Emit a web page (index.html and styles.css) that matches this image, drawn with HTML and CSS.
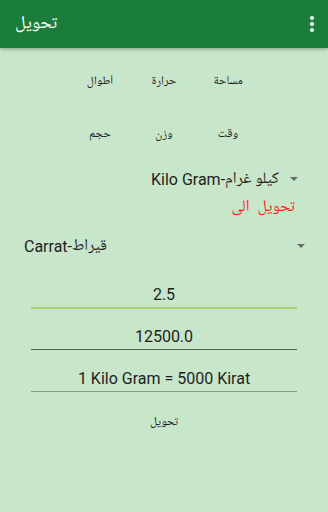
FILE: index.html
```html
<!DOCTYPE html>
<html lang="ar">
<head>
<meta charset="utf-8">
<title>تحويل</title>
<link rel="stylesheet" href="styles.css">
</head>
<body>
<header class="appbar">
  <div class="title">تحويل</div>
  <div class="menu"><span></span><span></span><span></span></div>
</header>
<main class="content">
  <div class="cats">
    <div class="cat">أطوال</div>
    <div class="cat">حرارة</div>
    <div class="cat">مساحة</div>
    <div class="cat">حجم</div>
    <div class="cat">وزن</div>
    <div class="cat">وقت</div>
  </div>
  <div class="spinner spinner-from">
    <span class="spin-text" dir="rtl">كيلو غرام-Kilo Gram</span>
    <span class="arrow"></span>
  </div>
  <div class="to-label" dir="rtl">تحويل&nbsp;&nbsp;الى</div>
  <div class="spinner spinner-to">
    <span class="spin-text" dir="rtl">قيراط-Carrat</span>
    <span class="arrow"></span>
  </div>
  <div class="field field-focus">2.5</div>
  <div class="field field-dark">12500.0</div>
  <div class="field field-light">1 Kilo Gram = 5000 Kirat</div>
  <div class="convert">تحويل</div>
</main>
</body>
</html>
```
FILE: styles.css
```css
* { box-sizing: border-box; }
html, body {
  margin: 0;
  padding: 0;
  width: 328px;
  height: 512px;
  overflow: hidden;
  background: #c8e6c9;
  font-family: "Roboto", "Noto Naskh Arabic UI", "Noto Naskh Arabic", "Noto Sans Arabic UI", "Noto Sans Arabic", "DejaVu Sans", sans-serif;
  color: #1e1e1e;
}
.appbar {
  height: 48px;
  background: #1a7d3b;
  display: flex;
  align-items: center;
  justify-content: space-between;
  padding: 0 16px 0 15px;
  box-shadow: 0 2px 3px rgba(0,0,0,0.22);
  position: relative;
}
.title {
  color: #ffffff;
  font-size: 18px;
  line-height: 24px;
}
.menu {
  display: flex;
  flex-direction: column;
  gap: 2px;
  margin-right: -2px;
}
.menu span {
  width: 4px;
  height: 4px;
  border-radius: 50%;
  background: #ffffff;
}
.content {
  display: flex;
  flex-direction: column;
}
.cats {
  margin: 9px auto 0;
  display: grid;
  grid-template-columns: repeat(3, 64px);
  grid-auto-rows: 48px;
  row-gap: 5px;
}
.cat {
  display: flex;
  align-items: center;
  justify-content: center;
  font-size: 12px;
  color: #222;
}
.spinner {
  display: flex;
  align-items: center;
  height: 24px;
  font-size: 16px;
  color: #1e1e1e;
}
.spinner-from {
  margin-top: 9px;
  justify-content: flex-end;
  padding-right: 30px;
  gap: 11px;
}
.spinner-to {
  margin-top: 15px;
  justify-content: space-between;
  padding-left: 24px;
  padding-right: 23px;
}
.arrow {
  width: 0;
  height: 0;
  border-left: 4px solid transparent;
  border-right: 4px solid transparent;
  border-top: 4px solid #6a6a6a;
}
.to-label {
  margin-top: 6px;
  height: 22px;
  line-height: 22px;
  font-size: 16px;
  color: #ff2020;
  padding-right: 33px;
}
.field {
  margin: 0 31px;
  font-size: 16px;
  line-height: 20px;
  text-align: center;
  padding-bottom: 2px;
  color: #1e1e1e;
}
.field-focus {
  margin-top: 27px;
  border-bottom: 2px solid #a6d16c;
}
.field-dark {
  margin-top: 18px;
  border-bottom: 1px solid #4e5e4e;
}
.field-light {
  margin-top: 19px;
  border-bottom: 1.5px solid #8a9a8a;
}
.convert {
  margin: 12px auto 0;
  width: 64px;
  height: 36px;
  display: flex;
  align-items: center;
  justify-content: center;
  font-size: 12px;
  color: #222;
}
```
